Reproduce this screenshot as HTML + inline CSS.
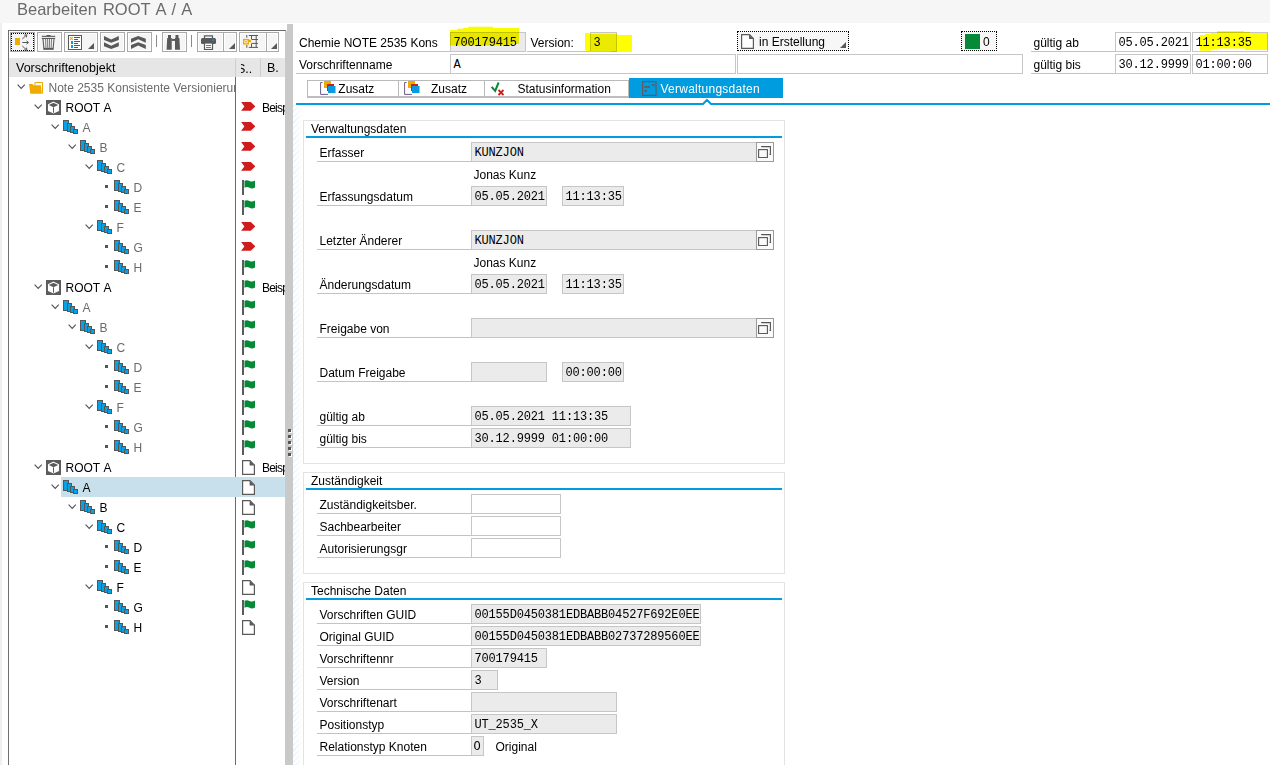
<!DOCTYPE html>
<html><head><meta charset="utf-8"><style>
html,body{margin:0;padding:0;}
body{width:1270px;height:765px;overflow:hidden;position:relative;background:#fff;font-family:'Liberation Sans',sans-serif;}
body div, body span, body svg{position:absolute;box-sizing:border-box;}
span{white-space:nowrap;}
.m{font-family:'Liberation Mono',monospace;font-size:12px;line-height:12px;letter-spacing:-0.17px;}
</style></head><body>
<div style="left:0px;top:0px;width:1270px;height:23px;background:#f6f6f6"></div>
<div style="left:0px;top:23px;width:2px;height:742px;background:#f0f0f0"></div>
<span style="left:17px;top:1px;font-size:16.5px;line-height:17px;word-spacing:1.5px;color:#6a6a6a">Bearbeiten ROOT A / A</span>
<div style="left:8px;top:30px;width:1px;height:735px;background:#6e6e6e"></div>
<div style="left:8px;top:30px;width:278px;height:1px;background:#6e6e6e"></div>
<div style="left:287px;top:24px;width:6px;height:741px;background:#c9c9c9"></div>
<div style="left:285px;top:31px;width:2px;height:734px;background:#c9c9c9"></div>
<div style="left:288px;top:429px;width:3px;height:3px;background:#555;box-shadow:1px 1px 0 #fff"></div>
<div style="left:288px;top:435px;width:3px;height:3px;background:#555;box-shadow:1px 1px 0 #fff"></div>
<div style="left:288px;top:441px;width:3px;height:3px;background:#555;box-shadow:1px 1px 0 #fff"></div>
<div style="left:288px;top:447px;width:3px;height:3px;background:#555;box-shadow:1px 1px 0 #fff"></div>
<div style="left:288px;top:453px;width:3px;height:3px;background:#555;box-shadow:1px 1px 0 #fff"></div>
<div style="left:293px;top:105px;width:10px;height:660px;background:linear-gradient(to right,rgba(255,255,255,0) 0,rgba(255,255,255,0.2) 3px,#fff 10px),repeating-linear-gradient(135deg,#ecf4fb 0 1.5px,#fdfeff 1.5px 4px)"></div>
<div style="left:10px;top:32px;width:25px;height:20px;background:#f5f5f5;border:1px solid #a9a9a9"></div>
<div style="left:11px;top:33px;width:23px;height:18px;border:1px dotted #000"></div>
<div style="left:37px;top:32px;width:25px;height:20px;background:#f5f5f5;border:1px solid #a9a9a9;box-shadow:inset 0 0 0 1px #fff"></div>
<div style="left:64px;top:32px;width:34px;height:20px;background:#f5f5f5;border:1px solid #a9a9a9;box-shadow:inset 0 0 0 1px #fff"></div>
<div style="left:100px;top:32px;width:25px;height:20px;background:#f5f5f5;border:1px solid #a9a9a9;box-shadow:inset 0 0 0 1px #fff"></div>
<div style="left:127px;top:32px;width:25px;height:20px;background:#f5f5f5;border:1px solid #a9a9a9;box-shadow:inset 0 0 0 1px #fff"></div>
<div style="left:156px;top:35px;width:1px;height:12px;background:#8a8a8a"></div>
<div style="left:162px;top:32px;width:25px;height:20px;background:#f5f5f5;border:1px solid #a9a9a9;box-shadow:inset 0 0 0 1px #fff"></div>
<div style="left:191px;top:35px;width:1px;height:12px;background:#8a8a8a"></div>
<div style="left:197px;top:32px;width:27px;height:20px;background:#f5f5f5;border:1px solid #a9a9a9;box-shadow:inset 0 0 0 1px #fff"></div>
<div style="left:223px;top:32px;width:14px;height:20px;background:#f5f5f5;border:1px solid #a9a9a9;box-shadow:inset 0 0 0 1px #fff"></div>
<div style="left:239px;top:32px;width:28px;height:20px;background:#f5f5f5;border:1px solid #a9a9a9;box-shadow:inset 0 0 0 1px #fff"></div>
<div style="left:266px;top:32px;width:13px;height:20px;background:#f5f5f5;border:1px solid #a9a9a9;box-shadow:inset 0 0 0 1px #fff"></div>
<svg style="left:88px;top:43px;" width="6" height="6" viewBox="0 0 6 6" shape-rendering="crispEdges"><path d="M6 0 L6 6 L0 6 Z" fill="#595959" shape-rendering="geometricPrecision"/></svg>
<svg style="left:229px;top:43px;" width="6" height="6" viewBox="0 0 6 6" shape-rendering="crispEdges"><path d="M6 0 L6 6 L0 6 Z" fill="#595959" shape-rendering="geometricPrecision"/></svg>
<svg style="left:271px;top:43px;" width="6" height="6" viewBox="0 0 6 6" shape-rendering="crispEdges"><path d="M6 0 L6 6 L0 6 Z" fill="#595959" shape-rendering="geometricPrecision"/></svg>
<svg style="left:15px;top:34px;" width="15" height="17" viewBox="0 0 15 17" shape-rendering="crispEdges"><rect x="0" y="4" width="5" height="7" fill="#f0ab00"/>
<g stroke="#595959" stroke-width="1" fill="none" shape-rendering="geometricPrecision">
<path d="M7.3 5 L11.3 1.3"/><path d="M9.2 1.1 L11.8 0.8 L11.5 3.4"/>
<path d="M7.3 8.5 L13.3 8.5"/><path d="M11.5 6.8 L13.5 8.5 L11.5 10.2"/>
<path d="M7.3 12 L11.3 15.7"/><path d="M9.2 15.9 L11.8 16.2 L11.5 13.6"/></g></svg>
<svg style="left:41px;top:34px;" width="15" height="16" viewBox="0 0 15 16" shape-rendering="crispEdges"><g shape-rendering="geometricPrecision" fill="#595959">
<rect x="5.5" y="1" width="4" height="1.3"/>
<rect x="0.8" y="1.8" width="13.4" height="1.1"/>
<rect x="0.8" y="3.9" width="13.4" height="1.1"/>
<path d="M2 5 L3 15.7 M13 5 L12 15.7" fill="none" stroke="#595959" stroke-width="1.1"/>
<path d="M4.6 5 L4.9 13.8 M6.6 5 L6.7 13.8 M8.5 5 L8.4 13.8 M10.5 5 L10.2 13.8" fill="none" stroke="#595959" stroke-width="0.8"/>
<rect x="2.8" y="13.8" width="9.4" height="2"/></g></svg>
<svg style="left:68px;top:35px;" width="14" height="15" viewBox="0 0 14 15" shape-rendering="crispEdges"><rect x="0.5" y="0.5" width="13" height="14" fill="#fff" stroke="#595959" stroke-width="1"/>
<path d="M2.2 2 L4.8 4.8 M4.8 2 L2.2 4.8" stroke="#f0ab00" stroke-width="1.1" shape-rendering="geometricPrecision"/>
<rect x="2.8" y="6" width="2.4" height="2.5" fill="#0a9ae0"/><rect x="2.8" y="10" width="2.4" height="2.5" fill="#0a9ae0"/>
<g fill="#595959"><rect x="6" y="2" width="6" height="1"/><rect x="6" y="4" width="4" height="1"/><rect x="6" y="6" width="6" height="1"/><rect x="6" y="8" width="4" height="1"/><rect x="6" y="10" width="6" height="1"/><rect x="6" y="12" width="4" height="1"/></g></svg>
<svg style="left:104px;top:36px;" width="15" height="14" viewBox="0 0 15 14" shape-rendering="crispEdges"><g fill="#595959" shape-rendering="geometricPrecision"><path d="M0 0 L7.2 3.4 L14.8 0 L14.8 3.9 L7.2 6.8 L0 3.9 Z"/><path d="M0 6.3 L7.2 9.7 L14.8 6.3 L14.8 10.2 L7.2 13.1 L0 10.2 Z"/></g></svg>
<svg style="left:131px;top:35px;" width="15" height="14" viewBox="0 0 15 14" shape-rendering="crispEdges"><g fill="#595959" shape-rendering="geometricPrecision" transform="translate(0,14) scale(1,-1)"><path d="M0 0 L7.2 3.4 L14.8 0 L14.8 3.9 L7.2 6.8 L0 3.9 Z"/><path d="M0 6.3 L7.2 9.7 L14.8 6.3 L14.8 10.2 L7.2 13.1 L0 10.2 Z"/></g></svg>
<svg style="left:166px;top:35px;" width="15" height="15" viewBox="0 0 15 15" shape-rendering="crispEdges"><g fill="#595959" shape-rendering="geometricPrecision">
<path d="M2 0 H5 V3 H5.7 V14.8 H0.6 L1.2 3 H2 Z"/>
<path d="M9.5 0 H12.5 V3 H13.4 L14 14.8 H9 V3 H9.5 Z"/>
<rect x="5.5" y="3.9" width="4" height="2"/></g></svg>
<svg style="left:201px;top:35px;" width="15" height="15" viewBox="0 0 15 15" shape-rendering="crispEdges"><g shape-rendering="geometricPrecision">
<path d="M3.5 3 L3.5 0.8 L11.5 0.8 L11.5 3" fill="none" stroke="#595959" stroke-width="1.2"/>
<rect x="0" y="3" width="15" height="6" rx="1.5" fill="#595959"/>
<rect x="11" y="4.5" width="2" height="1.2" fill="#0a9ae0"/>
<rect x="3.5" y="8" width="8" height="6.5" fill="#fff" stroke="#595959" stroke-width="1.2"/>
<rect x="5" y="10" width="5" height="1" fill="#0a9ae0"/><rect x="5" y="12" width="5" height="1" fill="#0a9ae0"/></g></svg>
<svg style="left:243px;top:35px;" width="16" height="14" viewBox="0 0 16 14" shape-rendering="crispEdges"><g shape-rendering="geometricPrecision">
<g stroke="#595959" stroke-width="1" fill="none"><path d="M3.8 0 L3.8 2.7 M3.8 10 L3.8 12.8 M5.8 0.5 L15 0.5 M5.8 12.4 L15 12.4 M8.5 0.5 L8.5 4.6 M8.5 8.4 L8.5 12.4 M13.2 0.5 L13.2 12.4 M9 4.5 L15 4.5 M9 8.4 L15 8.4"/></g>
<rect x="0.7" y="4.6" width="4.6" height="4.3" fill="#fff" stroke="#f0ab00" stroke-width="1.4"/>
<circle cx="3" cy="6.7" r="0.9" fill="#f0ab00"/>
<path d="M5.2 4.8 L8.2 4.8 L8.2 7.6 L7.3 7.6 L7.3 6.9 L5.2 6.9 Z" fill="#f0ab00"/></g></svg>
<div style="left:9px;top:58px;width:276px;height:19px;background:#e6e6e6"></div>
<div style="left:235px;top:58px;width:1px;height:19px;background:#cfcfcf"></div>
<div style="left:260px;top:58px;width:1px;height:19px;background:#cfcfcf"></div>
<span style="left:16px;top:62px;font-size:12.5px;line-height:12px;color:#000;">Vorschriftenobjekt</span>
<div style="left:241px;top:58px;width:19px;height:19px;overflow:hidden"><span style="left:-4px;top:5px;font-size:12.5px;line-height:13px;color:#000">S..</span></div>
<span style="left:267px;top:62px;font-size:12.5px;line-height:12px;color:#000;">B.</span>
<div style="left:235px;top:77px;width:1px;height:688px;background:#6a6a6a"></div>
<svg style="left:17px;top:84px;" width="9" height="6" viewBox="0 0 9 6" shape-rendering="crispEdges"><path d="M0.6 0.6 L4.2 4.4 L7.8 0.6" fill="none" stroke="#555" stroke-width="1.15" shape-rendering="geometricPrecision"/></svg>
<svg style="left:29px;top:82px;" width="14" height="12" viewBox="0 0 14 12" shape-rendering="crispEdges"><g shape-rendering="geometricPrecision"><path d="M6 3.5 L6 0.5 L13.5 0.5 L13.5 11.5" fill="#fff" stroke="#f0ab00" stroke-width="1"/><path d="M0 2 L3.5 2 L4.5 3.3 L11.9 3.3 L12.9 11.8 L1.3 11.8 Z" fill="#f0ab00"/></g></svg>
<div style="left:48.5px;top:77px;width:186.5px;height:20px;overflow:hidden"><span style="left:0;top:5px;font-size:12px;line-height:12px;color:#6b6b6b">Note 2535 Konsistente Versionierung</span></div>
<svg style="left:34px;top:104px;" width="9" height="6" viewBox="0 0 9 6" shape-rendering="crispEdges"><path d="M0.6 0.6 L4.2 4.4 L7.8 0.6" fill="none" stroke="#555" stroke-width="1.15" shape-rendering="geometricPrecision"/></svg>
<svg style="left:46px;top:100px;" width="15" height="15" viewBox="0 0 15 15" shape-rendering="crispEdges"><rect x="0" y="0" width="15" height="15" fill="#5c5c5c"/><g shape-rendering="geometricPrecision" stroke="#fff" stroke-width="1.1" fill="none"><path d="M7.5 2.2 L12.5 4.6 L12.5 10.6 L7.5 13 L2.5 10.6 L2.5 4.6 Z"/></g><path d="M2.8 4.9 L7.5 7.3 L12.2 4.9 L12.2 10.4 L7.5 12.7 L2.8 10.4 Z" fill="#fff" shape-rendering="geometricPrecision"/><path d="M7.5 7.3 L7.5 12.7" stroke="#5c5c5c" stroke-width="1" shape-rendering="geometricPrecision"/></svg>
<span style="left:65.5px;top:102px;font-size:12px;line-height:12px;word-spacing:1px;color:#000">ROOT A</span>
<svg style="left:241px;top:102px;" width="14" height="10" viewBox="0 0 14 10" shape-rendering="crispEdges"><path d="M0.1 0 L9.8 0 L14.3 4.4 L9.8 8.8 L0.1 8.8 L3.4 4.4 Z" fill="#d01c1c" shape-rendering="geometricPrecision"/></svg>
<div style="left:262px;top:97px;width:23px;height:20px;overflow:hidden"><span style="left:0;top:5px;font-size:12px;line-height:12px;letter-spacing:-0.8px;color:#000">Beispiel</span></div>
<svg style="left:51px;top:124px;" width="9" height="6" viewBox="0 0 9 6" shape-rendering="crispEdges"><path d="M0.6 0.6 L4.2 4.4 L7.8 0.6" fill="none" stroke="#555" stroke-width="1.15" shape-rendering="geometricPrecision"/></svg>
<svg style="left:63px;top:120px;" width="15" height="14" viewBox="0 0 15 14" shape-rendering="crispEdges"><rect x="0" y="0" width="6" height="11" fill="#565656"/><rect x="1" y="1" width="4" height="9" fill="#05a2e6"/><rect x="4" y="3" width="5" height="9" fill="#565656"/><rect x="5" y="4" width="3" height="7" fill="#05a2e6"/><rect x="7" y="6" width="5" height="7" fill="#565656"/><rect x="8" y="7" width="3" height="5" fill="#05a2e6"/><rect x="10" y="9" width="5" height="5" fill="#565656"/><rect x="11" y="10" width="3" height="3" fill="#05a2e6"/><rect x="11" y="13" width="4" height="1" fill="#565656"/></svg>
<span style="left:82.5px;top:122px;font-size:12px;line-height:12px;word-spacing:1px;color:#6b6b6b">A</span>
<svg style="left:241px;top:122px;" width="14" height="10" viewBox="0 0 14 10" shape-rendering="crispEdges"><path d="M0.1 0 L9.8 0 L14.3 4.4 L9.8 8.8 L0.1 8.8 L3.4 4.4 Z" fill="#d01c1c" shape-rendering="geometricPrecision"/></svg>
<svg style="left:68px;top:144px;" width="9" height="6" viewBox="0 0 9 6" shape-rendering="crispEdges"><path d="M0.6 0.6 L4.2 4.4 L7.8 0.6" fill="none" stroke="#555" stroke-width="1.15" shape-rendering="geometricPrecision"/></svg>
<svg style="left:80px;top:140px;" width="15" height="14" viewBox="0 0 15 14" shape-rendering="crispEdges"><rect x="0" y="0" width="6" height="11" fill="#565656"/><rect x="1" y="1" width="4" height="9" fill="#05a2e6"/><rect x="4" y="3" width="5" height="9" fill="#565656"/><rect x="5" y="4" width="3" height="7" fill="#05a2e6"/><rect x="7" y="6" width="5" height="7" fill="#565656"/><rect x="8" y="7" width="3" height="5" fill="#05a2e6"/><rect x="10" y="9" width="5" height="5" fill="#565656"/><rect x="11" y="10" width="3" height="3" fill="#05a2e6"/><rect x="11" y="13" width="4" height="1" fill="#565656"/></svg>
<span style="left:99.5px;top:142px;font-size:12px;line-height:12px;word-spacing:1px;color:#6b6b6b">B</span>
<svg style="left:241px;top:142px;" width="14" height="10" viewBox="0 0 14 10" shape-rendering="crispEdges"><path d="M0.1 0 L9.8 0 L14.3 4.4 L9.8 8.8 L0.1 8.8 L3.4 4.4 Z" fill="#d01c1c" shape-rendering="geometricPrecision"/></svg>
<svg style="left:85px;top:164px;" width="9" height="6" viewBox="0 0 9 6" shape-rendering="crispEdges"><path d="M0.6 0.6 L4.2 4.4 L7.8 0.6" fill="none" stroke="#555" stroke-width="1.15" shape-rendering="geometricPrecision"/></svg>
<svg style="left:97px;top:160px;" width="15" height="14" viewBox="0 0 15 14" shape-rendering="crispEdges"><rect x="0" y="0" width="6" height="11" fill="#565656"/><rect x="1" y="1" width="4" height="9" fill="#05a2e6"/><rect x="4" y="3" width="5" height="9" fill="#565656"/><rect x="5" y="4" width="3" height="7" fill="#05a2e6"/><rect x="7" y="6" width="5" height="7" fill="#565656"/><rect x="8" y="7" width="3" height="5" fill="#05a2e6"/><rect x="10" y="9" width="5" height="5" fill="#565656"/><rect x="11" y="10" width="3" height="3" fill="#05a2e6"/><rect x="11" y="13" width="4" height="1" fill="#565656"/></svg>
<span style="left:116.5px;top:162px;font-size:12px;line-height:12px;word-spacing:1px;color:#6b6b6b">C</span>
<svg style="left:241px;top:162px;" width="14" height="10" viewBox="0 0 14 10" shape-rendering="crispEdges"><path d="M0.1 0 L9.8 0 L14.3 4.4 L9.8 8.8 L0.1 8.8 L3.4 4.4 Z" fill="#d01c1c" shape-rendering="geometricPrecision"/></svg>
<div style="left:105px;top:185px;width:3px;height:3px;background:#555"></div>
<svg style="left:114px;top:180px;" width="15" height="14" viewBox="0 0 15 14" shape-rendering="crispEdges"><rect x="0" y="0" width="6" height="11" fill="#565656"/><rect x="1" y="1" width="4" height="9" fill="#05a2e6"/><rect x="4" y="3" width="5" height="9" fill="#565656"/><rect x="5" y="4" width="3" height="7" fill="#05a2e6"/><rect x="7" y="6" width="5" height="7" fill="#565656"/><rect x="8" y="7" width="3" height="5" fill="#05a2e6"/><rect x="10" y="9" width="5" height="5" fill="#565656"/><rect x="11" y="10" width="3" height="3" fill="#05a2e6"/><rect x="11" y="13" width="4" height="1" fill="#565656"/></svg>
<span style="left:133.5px;top:182px;font-size:12px;line-height:12px;word-spacing:1px;color:#6b6b6b">D</span>
<svg style="left:241.5px;top:180px;" width="14" height="15" viewBox="0 0 14 15" shape-rendering="crispEdges"><rect x="0" y="0" width="2" height="15" fill="#5a5a5a"/><path d="M2.5 0.8 Q5 -0.6 7.5 1 Q10 2.2 13 0.6 L13 7.6 Q10 9.4 7.5 7.8 Q5 6.4 2.5 7.8 Z" fill="#078a38" shape-rendering="geometricPrecision"/></svg>
<div style="left:105px;top:205px;width:3px;height:3px;background:#555"></div>
<svg style="left:114px;top:200px;" width="15" height="14" viewBox="0 0 15 14" shape-rendering="crispEdges"><rect x="0" y="0" width="6" height="11" fill="#565656"/><rect x="1" y="1" width="4" height="9" fill="#05a2e6"/><rect x="4" y="3" width="5" height="9" fill="#565656"/><rect x="5" y="4" width="3" height="7" fill="#05a2e6"/><rect x="7" y="6" width="5" height="7" fill="#565656"/><rect x="8" y="7" width="3" height="5" fill="#05a2e6"/><rect x="10" y="9" width="5" height="5" fill="#565656"/><rect x="11" y="10" width="3" height="3" fill="#05a2e6"/><rect x="11" y="13" width="4" height="1" fill="#565656"/></svg>
<span style="left:133.5px;top:202px;font-size:12px;line-height:12px;word-spacing:1px;color:#6b6b6b">E</span>
<svg style="left:241.5px;top:200px;" width="14" height="15" viewBox="0 0 14 15" shape-rendering="crispEdges"><rect x="0" y="0" width="2" height="15" fill="#5a5a5a"/><path d="M2.5 0.8 Q5 -0.6 7.5 1 Q10 2.2 13 0.6 L13 7.6 Q10 9.4 7.5 7.8 Q5 6.4 2.5 7.8 Z" fill="#078a38" shape-rendering="geometricPrecision"/></svg>
<svg style="left:85px;top:224px;" width="9" height="6" viewBox="0 0 9 6" shape-rendering="crispEdges"><path d="M0.6 0.6 L4.2 4.4 L7.8 0.6" fill="none" stroke="#555" stroke-width="1.15" shape-rendering="geometricPrecision"/></svg>
<svg style="left:97px;top:220px;" width="15" height="14" viewBox="0 0 15 14" shape-rendering="crispEdges"><rect x="0" y="0" width="6" height="11" fill="#565656"/><rect x="1" y="1" width="4" height="9" fill="#05a2e6"/><rect x="4" y="3" width="5" height="9" fill="#565656"/><rect x="5" y="4" width="3" height="7" fill="#05a2e6"/><rect x="7" y="6" width="5" height="7" fill="#565656"/><rect x="8" y="7" width="3" height="5" fill="#05a2e6"/><rect x="10" y="9" width="5" height="5" fill="#565656"/><rect x="11" y="10" width="3" height="3" fill="#05a2e6"/><rect x="11" y="13" width="4" height="1" fill="#565656"/></svg>
<span style="left:116.5px;top:222px;font-size:12px;line-height:12px;word-spacing:1px;color:#6b6b6b">F</span>
<svg style="left:241px;top:222px;" width="14" height="10" viewBox="0 0 14 10" shape-rendering="crispEdges"><path d="M0.1 0 L9.8 0 L14.3 4.4 L9.8 8.8 L0.1 8.8 L3.4 4.4 Z" fill="#d01c1c" shape-rendering="geometricPrecision"/></svg>
<div style="left:105px;top:245px;width:3px;height:3px;background:#555"></div>
<svg style="left:114px;top:240px;" width="15" height="14" viewBox="0 0 15 14" shape-rendering="crispEdges"><rect x="0" y="0" width="6" height="11" fill="#565656"/><rect x="1" y="1" width="4" height="9" fill="#05a2e6"/><rect x="4" y="3" width="5" height="9" fill="#565656"/><rect x="5" y="4" width="3" height="7" fill="#05a2e6"/><rect x="7" y="6" width="5" height="7" fill="#565656"/><rect x="8" y="7" width="3" height="5" fill="#05a2e6"/><rect x="10" y="9" width="5" height="5" fill="#565656"/><rect x="11" y="10" width="3" height="3" fill="#05a2e6"/><rect x="11" y="13" width="4" height="1" fill="#565656"/></svg>
<span style="left:133.5px;top:242px;font-size:12px;line-height:12px;word-spacing:1px;color:#6b6b6b">G</span>
<svg style="left:241px;top:242px;" width="14" height="10" viewBox="0 0 14 10" shape-rendering="crispEdges"><path d="M0.1 0 L9.8 0 L14.3 4.4 L9.8 8.8 L0.1 8.8 L3.4 4.4 Z" fill="#d01c1c" shape-rendering="geometricPrecision"/></svg>
<div style="left:105px;top:265px;width:3px;height:3px;background:#555"></div>
<svg style="left:114px;top:260px;" width="15" height="14" viewBox="0 0 15 14" shape-rendering="crispEdges"><rect x="0" y="0" width="6" height="11" fill="#565656"/><rect x="1" y="1" width="4" height="9" fill="#05a2e6"/><rect x="4" y="3" width="5" height="9" fill="#565656"/><rect x="5" y="4" width="3" height="7" fill="#05a2e6"/><rect x="7" y="6" width="5" height="7" fill="#565656"/><rect x="8" y="7" width="3" height="5" fill="#05a2e6"/><rect x="10" y="9" width="5" height="5" fill="#565656"/><rect x="11" y="10" width="3" height="3" fill="#05a2e6"/><rect x="11" y="13" width="4" height="1" fill="#565656"/></svg>
<span style="left:133.5px;top:262px;font-size:12px;line-height:12px;word-spacing:1px;color:#6b6b6b">H</span>
<svg style="left:241.5px;top:260px;" width="14" height="15" viewBox="0 0 14 15" shape-rendering="crispEdges"><rect x="0" y="0" width="2" height="15" fill="#5a5a5a"/><path d="M2.5 0.8 Q5 -0.6 7.5 1 Q10 2.2 13 0.6 L13 7.6 Q10 9.4 7.5 7.8 Q5 6.4 2.5 7.8 Z" fill="#078a38" shape-rendering="geometricPrecision"/></svg>
<svg style="left:34px;top:284px;" width="9" height="6" viewBox="0 0 9 6" shape-rendering="crispEdges"><path d="M0.6 0.6 L4.2 4.4 L7.8 0.6" fill="none" stroke="#555" stroke-width="1.15" shape-rendering="geometricPrecision"/></svg>
<svg style="left:46px;top:280px;" width="15" height="15" viewBox="0 0 15 15" shape-rendering="crispEdges"><rect x="0" y="0" width="15" height="15" fill="#5c5c5c"/><g shape-rendering="geometricPrecision" stroke="#fff" stroke-width="1.1" fill="none"><path d="M7.5 2.2 L12.5 4.6 L12.5 10.6 L7.5 13 L2.5 10.6 L2.5 4.6 Z"/></g><path d="M2.8 4.9 L7.5 7.3 L12.2 4.9 L12.2 10.4 L7.5 12.7 L2.8 10.4 Z" fill="#fff" shape-rendering="geometricPrecision"/><path d="M7.5 7.3 L7.5 12.7" stroke="#5c5c5c" stroke-width="1" shape-rendering="geometricPrecision"/></svg>
<span style="left:65.5px;top:282px;font-size:12px;line-height:12px;word-spacing:1px;color:#000">ROOT A</span>
<svg style="left:241.5px;top:280px;" width="14" height="15" viewBox="0 0 14 15" shape-rendering="crispEdges"><rect x="0" y="0" width="2" height="15" fill="#5a5a5a"/><path d="M2.5 0.8 Q5 -0.6 7.5 1 Q10 2.2 13 0.6 L13 7.6 Q10 9.4 7.5 7.8 Q5 6.4 2.5 7.8 Z" fill="#078a38" shape-rendering="geometricPrecision"/></svg>
<div style="left:262px;top:277px;width:23px;height:20px;overflow:hidden"><span style="left:0;top:5px;font-size:12px;line-height:12px;letter-spacing:-0.8px;color:#000">Beispiel</span></div>
<svg style="left:51px;top:304px;" width="9" height="6" viewBox="0 0 9 6" shape-rendering="crispEdges"><path d="M0.6 0.6 L4.2 4.4 L7.8 0.6" fill="none" stroke="#555" stroke-width="1.15" shape-rendering="geometricPrecision"/></svg>
<svg style="left:63px;top:300px;" width="15" height="14" viewBox="0 0 15 14" shape-rendering="crispEdges"><rect x="0" y="0" width="6" height="11" fill="#565656"/><rect x="1" y="1" width="4" height="9" fill="#05a2e6"/><rect x="4" y="3" width="5" height="9" fill="#565656"/><rect x="5" y="4" width="3" height="7" fill="#05a2e6"/><rect x="7" y="6" width="5" height="7" fill="#565656"/><rect x="8" y="7" width="3" height="5" fill="#05a2e6"/><rect x="10" y="9" width="5" height="5" fill="#565656"/><rect x="11" y="10" width="3" height="3" fill="#05a2e6"/><rect x="11" y="13" width="4" height="1" fill="#565656"/></svg>
<span style="left:82.5px;top:302px;font-size:12px;line-height:12px;word-spacing:1px;color:#6b6b6b">A</span>
<svg style="left:241.5px;top:300px;" width="14" height="15" viewBox="0 0 14 15" shape-rendering="crispEdges"><rect x="0" y="0" width="2" height="15" fill="#5a5a5a"/><path d="M2.5 0.8 Q5 -0.6 7.5 1 Q10 2.2 13 0.6 L13 7.6 Q10 9.4 7.5 7.8 Q5 6.4 2.5 7.8 Z" fill="#078a38" shape-rendering="geometricPrecision"/></svg>
<svg style="left:68px;top:324px;" width="9" height="6" viewBox="0 0 9 6" shape-rendering="crispEdges"><path d="M0.6 0.6 L4.2 4.4 L7.8 0.6" fill="none" stroke="#555" stroke-width="1.15" shape-rendering="geometricPrecision"/></svg>
<svg style="left:80px;top:320px;" width="15" height="14" viewBox="0 0 15 14" shape-rendering="crispEdges"><rect x="0" y="0" width="6" height="11" fill="#565656"/><rect x="1" y="1" width="4" height="9" fill="#05a2e6"/><rect x="4" y="3" width="5" height="9" fill="#565656"/><rect x="5" y="4" width="3" height="7" fill="#05a2e6"/><rect x="7" y="6" width="5" height="7" fill="#565656"/><rect x="8" y="7" width="3" height="5" fill="#05a2e6"/><rect x="10" y="9" width="5" height="5" fill="#565656"/><rect x="11" y="10" width="3" height="3" fill="#05a2e6"/><rect x="11" y="13" width="4" height="1" fill="#565656"/></svg>
<span style="left:99.5px;top:322px;font-size:12px;line-height:12px;word-spacing:1px;color:#6b6b6b">B</span>
<svg style="left:241.5px;top:320px;" width="14" height="15" viewBox="0 0 14 15" shape-rendering="crispEdges"><rect x="0" y="0" width="2" height="15" fill="#5a5a5a"/><path d="M2.5 0.8 Q5 -0.6 7.5 1 Q10 2.2 13 0.6 L13 7.6 Q10 9.4 7.5 7.8 Q5 6.4 2.5 7.8 Z" fill="#078a38" shape-rendering="geometricPrecision"/></svg>
<svg style="left:85px;top:344px;" width="9" height="6" viewBox="0 0 9 6" shape-rendering="crispEdges"><path d="M0.6 0.6 L4.2 4.4 L7.8 0.6" fill="none" stroke="#555" stroke-width="1.15" shape-rendering="geometricPrecision"/></svg>
<svg style="left:97px;top:340px;" width="15" height="14" viewBox="0 0 15 14" shape-rendering="crispEdges"><rect x="0" y="0" width="6" height="11" fill="#565656"/><rect x="1" y="1" width="4" height="9" fill="#05a2e6"/><rect x="4" y="3" width="5" height="9" fill="#565656"/><rect x="5" y="4" width="3" height="7" fill="#05a2e6"/><rect x="7" y="6" width="5" height="7" fill="#565656"/><rect x="8" y="7" width="3" height="5" fill="#05a2e6"/><rect x="10" y="9" width="5" height="5" fill="#565656"/><rect x="11" y="10" width="3" height="3" fill="#05a2e6"/><rect x="11" y="13" width="4" height="1" fill="#565656"/></svg>
<span style="left:116.5px;top:342px;font-size:12px;line-height:12px;word-spacing:1px;color:#6b6b6b">C</span>
<svg style="left:241.5px;top:340px;" width="14" height="15" viewBox="0 0 14 15" shape-rendering="crispEdges"><rect x="0" y="0" width="2" height="15" fill="#5a5a5a"/><path d="M2.5 0.8 Q5 -0.6 7.5 1 Q10 2.2 13 0.6 L13 7.6 Q10 9.4 7.5 7.8 Q5 6.4 2.5 7.8 Z" fill="#078a38" shape-rendering="geometricPrecision"/></svg>
<div style="left:105px;top:365px;width:3px;height:3px;background:#555"></div>
<svg style="left:114px;top:360px;" width="15" height="14" viewBox="0 0 15 14" shape-rendering="crispEdges"><rect x="0" y="0" width="6" height="11" fill="#565656"/><rect x="1" y="1" width="4" height="9" fill="#05a2e6"/><rect x="4" y="3" width="5" height="9" fill="#565656"/><rect x="5" y="4" width="3" height="7" fill="#05a2e6"/><rect x="7" y="6" width="5" height="7" fill="#565656"/><rect x="8" y="7" width="3" height="5" fill="#05a2e6"/><rect x="10" y="9" width="5" height="5" fill="#565656"/><rect x="11" y="10" width="3" height="3" fill="#05a2e6"/><rect x="11" y="13" width="4" height="1" fill="#565656"/></svg>
<span style="left:133.5px;top:362px;font-size:12px;line-height:12px;word-spacing:1px;color:#6b6b6b">D</span>
<svg style="left:241.5px;top:360px;" width="14" height="15" viewBox="0 0 14 15" shape-rendering="crispEdges"><rect x="0" y="0" width="2" height="15" fill="#5a5a5a"/><path d="M2.5 0.8 Q5 -0.6 7.5 1 Q10 2.2 13 0.6 L13 7.6 Q10 9.4 7.5 7.8 Q5 6.4 2.5 7.8 Z" fill="#078a38" shape-rendering="geometricPrecision"/></svg>
<div style="left:105px;top:385px;width:3px;height:3px;background:#555"></div>
<svg style="left:114px;top:380px;" width="15" height="14" viewBox="0 0 15 14" shape-rendering="crispEdges"><rect x="0" y="0" width="6" height="11" fill="#565656"/><rect x="1" y="1" width="4" height="9" fill="#05a2e6"/><rect x="4" y="3" width="5" height="9" fill="#565656"/><rect x="5" y="4" width="3" height="7" fill="#05a2e6"/><rect x="7" y="6" width="5" height="7" fill="#565656"/><rect x="8" y="7" width="3" height="5" fill="#05a2e6"/><rect x="10" y="9" width="5" height="5" fill="#565656"/><rect x="11" y="10" width="3" height="3" fill="#05a2e6"/><rect x="11" y="13" width="4" height="1" fill="#565656"/></svg>
<span style="left:133.5px;top:382px;font-size:12px;line-height:12px;word-spacing:1px;color:#6b6b6b">E</span>
<svg style="left:241.5px;top:380px;" width="14" height="15" viewBox="0 0 14 15" shape-rendering="crispEdges"><rect x="0" y="0" width="2" height="15" fill="#5a5a5a"/><path d="M2.5 0.8 Q5 -0.6 7.5 1 Q10 2.2 13 0.6 L13 7.6 Q10 9.4 7.5 7.8 Q5 6.4 2.5 7.8 Z" fill="#078a38" shape-rendering="geometricPrecision"/></svg>
<svg style="left:85px;top:404px;" width="9" height="6" viewBox="0 0 9 6" shape-rendering="crispEdges"><path d="M0.6 0.6 L4.2 4.4 L7.8 0.6" fill="none" stroke="#555" stroke-width="1.15" shape-rendering="geometricPrecision"/></svg>
<svg style="left:97px;top:400px;" width="15" height="14" viewBox="0 0 15 14" shape-rendering="crispEdges"><rect x="0" y="0" width="6" height="11" fill="#565656"/><rect x="1" y="1" width="4" height="9" fill="#05a2e6"/><rect x="4" y="3" width="5" height="9" fill="#565656"/><rect x="5" y="4" width="3" height="7" fill="#05a2e6"/><rect x="7" y="6" width="5" height="7" fill="#565656"/><rect x="8" y="7" width="3" height="5" fill="#05a2e6"/><rect x="10" y="9" width="5" height="5" fill="#565656"/><rect x="11" y="10" width="3" height="3" fill="#05a2e6"/><rect x="11" y="13" width="4" height="1" fill="#565656"/></svg>
<span style="left:116.5px;top:402px;font-size:12px;line-height:12px;word-spacing:1px;color:#6b6b6b">F</span>
<svg style="left:241.5px;top:400px;" width="14" height="15" viewBox="0 0 14 15" shape-rendering="crispEdges"><rect x="0" y="0" width="2" height="15" fill="#5a5a5a"/><path d="M2.5 0.8 Q5 -0.6 7.5 1 Q10 2.2 13 0.6 L13 7.6 Q10 9.4 7.5 7.8 Q5 6.4 2.5 7.8 Z" fill="#078a38" shape-rendering="geometricPrecision"/></svg>
<div style="left:105px;top:425px;width:3px;height:3px;background:#555"></div>
<svg style="left:114px;top:420px;" width="15" height="14" viewBox="0 0 15 14" shape-rendering="crispEdges"><rect x="0" y="0" width="6" height="11" fill="#565656"/><rect x="1" y="1" width="4" height="9" fill="#05a2e6"/><rect x="4" y="3" width="5" height="9" fill="#565656"/><rect x="5" y="4" width="3" height="7" fill="#05a2e6"/><rect x="7" y="6" width="5" height="7" fill="#565656"/><rect x="8" y="7" width="3" height="5" fill="#05a2e6"/><rect x="10" y="9" width="5" height="5" fill="#565656"/><rect x="11" y="10" width="3" height="3" fill="#05a2e6"/><rect x="11" y="13" width="4" height="1" fill="#565656"/></svg>
<span style="left:133.5px;top:422px;font-size:12px;line-height:12px;word-spacing:1px;color:#6b6b6b">G</span>
<svg style="left:241.5px;top:420px;" width="14" height="15" viewBox="0 0 14 15" shape-rendering="crispEdges"><rect x="0" y="0" width="2" height="15" fill="#5a5a5a"/><path d="M2.5 0.8 Q5 -0.6 7.5 1 Q10 2.2 13 0.6 L13 7.6 Q10 9.4 7.5 7.8 Q5 6.4 2.5 7.8 Z" fill="#078a38" shape-rendering="geometricPrecision"/></svg>
<div style="left:105px;top:445px;width:3px;height:3px;background:#555"></div>
<svg style="left:114px;top:440px;" width="15" height="14" viewBox="0 0 15 14" shape-rendering="crispEdges"><rect x="0" y="0" width="6" height="11" fill="#565656"/><rect x="1" y="1" width="4" height="9" fill="#05a2e6"/><rect x="4" y="3" width="5" height="9" fill="#565656"/><rect x="5" y="4" width="3" height="7" fill="#05a2e6"/><rect x="7" y="6" width="5" height="7" fill="#565656"/><rect x="8" y="7" width="3" height="5" fill="#05a2e6"/><rect x="10" y="9" width="5" height="5" fill="#565656"/><rect x="11" y="10" width="3" height="3" fill="#05a2e6"/><rect x="11" y="13" width="4" height="1" fill="#565656"/></svg>
<span style="left:133.5px;top:442px;font-size:12px;line-height:12px;word-spacing:1px;color:#6b6b6b">H</span>
<svg style="left:241.5px;top:440px;" width="14" height="15" viewBox="0 0 14 15" shape-rendering="crispEdges"><rect x="0" y="0" width="2" height="15" fill="#5a5a5a"/><path d="M2.5 0.8 Q5 -0.6 7.5 1 Q10 2.2 13 0.6 L13 7.6 Q10 9.4 7.5 7.8 Q5 6.4 2.5 7.8 Z" fill="#078a38" shape-rendering="geometricPrecision"/></svg>
<svg style="left:34px;top:464px;" width="9" height="6" viewBox="0 0 9 6" shape-rendering="crispEdges"><path d="M0.6 0.6 L4.2 4.4 L7.8 0.6" fill="none" stroke="#555" stroke-width="1.15" shape-rendering="geometricPrecision"/></svg>
<svg style="left:46px;top:460px;" width="15" height="15" viewBox="0 0 15 15" shape-rendering="crispEdges"><rect x="0" y="0" width="15" height="15" fill="#5c5c5c"/><g shape-rendering="geometricPrecision" stroke="#fff" stroke-width="1.1" fill="none"><path d="M7.5 2.2 L12.5 4.6 L12.5 10.6 L7.5 13 L2.5 10.6 L2.5 4.6 Z"/></g><path d="M2.8 4.9 L7.5 7.3 L12.2 4.9 L12.2 10.4 L7.5 12.7 L2.8 10.4 Z" fill="#fff" shape-rendering="geometricPrecision"/><path d="M7.5 7.3 L7.5 12.7" stroke="#5c5c5c" stroke-width="1" shape-rendering="geometricPrecision"/></svg>
<span style="left:65.5px;top:462px;font-size:12px;line-height:12px;word-spacing:1px;color:#000">ROOT A</span>
<svg style="left:242px;top:460px;" width="13" height="15" viewBox="0 0 13 15" shape-rendering="crispEdges"><g shape-rendering="geometricPrecision"><path d="M0.6 0.6 L8 0.6 L12.4 5 L12.4 14.4 L0.6 14.4 Z" fill="#fff" stroke="#5a5a5a" stroke-width="1.2"/><path d="M7.6 0.6 L12.4 5.4 L7.6 5.4 Z" fill="#5a5a5a"/></g></svg>
<div style="left:262px;top:457px;width:23px;height:20px;overflow:hidden"><span style="left:0;top:5px;font-size:12px;line-height:12px;letter-spacing:-0.8px;color:#000">Beispiel</span></div>
<div style="left:61px;top:477px;width:224px;height:20px;background:#c8dfec"></div>
<svg style="left:51px;top:484px;" width="9" height="6" viewBox="0 0 9 6" shape-rendering="crispEdges"><path d="M0.6 0.6 L4.2 4.4 L7.8 0.6" fill="none" stroke="#555" stroke-width="1.15" shape-rendering="geometricPrecision"/></svg>
<svg style="left:63px;top:480px;" width="15" height="14" viewBox="0 0 15 14" shape-rendering="crispEdges"><rect x="0" y="0" width="6" height="11" fill="#565656"/><rect x="1" y="1" width="4" height="9" fill="#05a2e6"/><rect x="4" y="3" width="5" height="9" fill="#565656"/><rect x="5" y="4" width="3" height="7" fill="#05a2e6"/><rect x="7" y="6" width="5" height="7" fill="#565656"/><rect x="8" y="7" width="3" height="5" fill="#05a2e6"/><rect x="10" y="9" width="5" height="5" fill="#565656"/><rect x="11" y="10" width="3" height="3" fill="#05a2e6"/><rect x="11" y="13" width="4" height="1" fill="#565656"/></svg>
<span style="left:82.5px;top:482px;font-size:12px;line-height:12px;word-spacing:1px;color:#000">A</span>
<svg style="left:242px;top:480px;" width="13" height="15" viewBox="0 0 13 15" shape-rendering="crispEdges"><g shape-rendering="geometricPrecision"><path d="M0.6 0.6 L8 0.6 L12.4 5 L12.4 14.4 L0.6 14.4 Z" fill="#fff" stroke="#5a5a5a" stroke-width="1.2"/><path d="M7.6 0.6 L12.4 5.4 L7.6 5.4 Z" fill="#5a5a5a"/></g></svg>
<svg style="left:68px;top:504px;" width="9" height="6" viewBox="0 0 9 6" shape-rendering="crispEdges"><path d="M0.6 0.6 L4.2 4.4 L7.8 0.6" fill="none" stroke="#555" stroke-width="1.15" shape-rendering="geometricPrecision"/></svg>
<svg style="left:80px;top:500px;" width="15" height="14" viewBox="0 0 15 14" shape-rendering="crispEdges"><rect x="0" y="0" width="6" height="11" fill="#565656"/><rect x="1" y="1" width="4" height="9" fill="#05a2e6"/><rect x="4" y="3" width="5" height="9" fill="#565656"/><rect x="5" y="4" width="3" height="7" fill="#05a2e6"/><rect x="7" y="6" width="5" height="7" fill="#565656"/><rect x="8" y="7" width="3" height="5" fill="#05a2e6"/><rect x="10" y="9" width="5" height="5" fill="#565656"/><rect x="11" y="10" width="3" height="3" fill="#05a2e6"/><rect x="11" y="13" width="4" height="1" fill="#565656"/></svg>
<span style="left:99.5px;top:502px;font-size:12px;line-height:12px;word-spacing:1px;color:#000">B</span>
<svg style="left:242px;top:500px;" width="13" height="15" viewBox="0 0 13 15" shape-rendering="crispEdges"><g shape-rendering="geometricPrecision"><path d="M0.6 0.6 L8 0.6 L12.4 5 L12.4 14.4 L0.6 14.4 Z" fill="#fff" stroke="#5a5a5a" stroke-width="1.2"/><path d="M7.6 0.6 L12.4 5.4 L7.6 5.4 Z" fill="#5a5a5a"/></g></svg>
<svg style="left:85px;top:524px;" width="9" height="6" viewBox="0 0 9 6" shape-rendering="crispEdges"><path d="M0.6 0.6 L4.2 4.4 L7.8 0.6" fill="none" stroke="#555" stroke-width="1.15" shape-rendering="geometricPrecision"/></svg>
<svg style="left:97px;top:520px;" width="15" height="14" viewBox="0 0 15 14" shape-rendering="crispEdges"><rect x="0" y="0" width="6" height="11" fill="#565656"/><rect x="1" y="1" width="4" height="9" fill="#05a2e6"/><rect x="4" y="3" width="5" height="9" fill="#565656"/><rect x="5" y="4" width="3" height="7" fill="#05a2e6"/><rect x="7" y="6" width="5" height="7" fill="#565656"/><rect x="8" y="7" width="3" height="5" fill="#05a2e6"/><rect x="10" y="9" width="5" height="5" fill="#565656"/><rect x="11" y="10" width="3" height="3" fill="#05a2e6"/><rect x="11" y="13" width="4" height="1" fill="#565656"/></svg>
<span style="left:116.5px;top:522px;font-size:12px;line-height:12px;word-spacing:1px;color:#000">C</span>
<svg style="left:241.5px;top:520px;" width="14" height="15" viewBox="0 0 14 15" shape-rendering="crispEdges"><rect x="0" y="0" width="2" height="15" fill="#5a5a5a"/><path d="M2.5 0.8 Q5 -0.6 7.5 1 Q10 2.2 13 0.6 L13 7.6 Q10 9.4 7.5 7.8 Q5 6.4 2.5 7.8 Z" fill="#078a38" shape-rendering="geometricPrecision"/></svg>
<div style="left:105px;top:545px;width:3px;height:3px;background:#555"></div>
<svg style="left:114px;top:540px;" width="15" height="14" viewBox="0 0 15 14" shape-rendering="crispEdges"><rect x="0" y="0" width="6" height="11" fill="#565656"/><rect x="1" y="1" width="4" height="9" fill="#05a2e6"/><rect x="4" y="3" width="5" height="9" fill="#565656"/><rect x="5" y="4" width="3" height="7" fill="#05a2e6"/><rect x="7" y="6" width="5" height="7" fill="#565656"/><rect x="8" y="7" width="3" height="5" fill="#05a2e6"/><rect x="10" y="9" width="5" height="5" fill="#565656"/><rect x="11" y="10" width="3" height="3" fill="#05a2e6"/><rect x="11" y="13" width="4" height="1" fill="#565656"/></svg>
<span style="left:133.5px;top:542px;font-size:12px;line-height:12px;word-spacing:1px;color:#000">D</span>
<svg style="left:241.5px;top:540px;" width="14" height="15" viewBox="0 0 14 15" shape-rendering="crispEdges"><rect x="0" y="0" width="2" height="15" fill="#5a5a5a"/><path d="M2.5 0.8 Q5 -0.6 7.5 1 Q10 2.2 13 0.6 L13 7.6 Q10 9.4 7.5 7.8 Q5 6.4 2.5 7.8 Z" fill="#078a38" shape-rendering="geometricPrecision"/></svg>
<div style="left:105px;top:565px;width:3px;height:3px;background:#555"></div>
<svg style="left:114px;top:560px;" width="15" height="14" viewBox="0 0 15 14" shape-rendering="crispEdges"><rect x="0" y="0" width="6" height="11" fill="#565656"/><rect x="1" y="1" width="4" height="9" fill="#05a2e6"/><rect x="4" y="3" width="5" height="9" fill="#565656"/><rect x="5" y="4" width="3" height="7" fill="#05a2e6"/><rect x="7" y="6" width="5" height="7" fill="#565656"/><rect x="8" y="7" width="3" height="5" fill="#05a2e6"/><rect x="10" y="9" width="5" height="5" fill="#565656"/><rect x="11" y="10" width="3" height="3" fill="#05a2e6"/><rect x="11" y="13" width="4" height="1" fill="#565656"/></svg>
<span style="left:133.5px;top:562px;font-size:12px;line-height:12px;word-spacing:1px;color:#000">E</span>
<svg style="left:241.5px;top:560px;" width="14" height="15" viewBox="0 0 14 15" shape-rendering="crispEdges"><rect x="0" y="0" width="2" height="15" fill="#5a5a5a"/><path d="M2.5 0.8 Q5 -0.6 7.5 1 Q10 2.2 13 0.6 L13 7.6 Q10 9.4 7.5 7.8 Q5 6.4 2.5 7.8 Z" fill="#078a38" shape-rendering="geometricPrecision"/></svg>
<svg style="left:85px;top:584px;" width="9" height="6" viewBox="0 0 9 6" shape-rendering="crispEdges"><path d="M0.6 0.6 L4.2 4.4 L7.8 0.6" fill="none" stroke="#555" stroke-width="1.15" shape-rendering="geometricPrecision"/></svg>
<svg style="left:97px;top:580px;" width="15" height="14" viewBox="0 0 15 14" shape-rendering="crispEdges"><rect x="0" y="0" width="6" height="11" fill="#565656"/><rect x="1" y="1" width="4" height="9" fill="#05a2e6"/><rect x="4" y="3" width="5" height="9" fill="#565656"/><rect x="5" y="4" width="3" height="7" fill="#05a2e6"/><rect x="7" y="6" width="5" height="7" fill="#565656"/><rect x="8" y="7" width="3" height="5" fill="#05a2e6"/><rect x="10" y="9" width="5" height="5" fill="#565656"/><rect x="11" y="10" width="3" height="3" fill="#05a2e6"/><rect x="11" y="13" width="4" height="1" fill="#565656"/></svg>
<span style="left:116.5px;top:582px;font-size:12px;line-height:12px;word-spacing:1px;color:#000">F</span>
<svg style="left:242px;top:580px;" width="13" height="15" viewBox="0 0 13 15" shape-rendering="crispEdges"><g shape-rendering="geometricPrecision"><path d="M0.6 0.6 L8 0.6 L12.4 5 L12.4 14.4 L0.6 14.4 Z" fill="#fff" stroke="#5a5a5a" stroke-width="1.2"/><path d="M7.6 0.6 L12.4 5.4 L7.6 5.4 Z" fill="#5a5a5a"/></g></svg>
<div style="left:105px;top:605px;width:3px;height:3px;background:#555"></div>
<svg style="left:114px;top:600px;" width="15" height="14" viewBox="0 0 15 14" shape-rendering="crispEdges"><rect x="0" y="0" width="6" height="11" fill="#565656"/><rect x="1" y="1" width="4" height="9" fill="#05a2e6"/><rect x="4" y="3" width="5" height="9" fill="#565656"/><rect x="5" y="4" width="3" height="7" fill="#05a2e6"/><rect x="7" y="6" width="5" height="7" fill="#565656"/><rect x="8" y="7" width="3" height="5" fill="#05a2e6"/><rect x="10" y="9" width="5" height="5" fill="#565656"/><rect x="11" y="10" width="3" height="3" fill="#05a2e6"/><rect x="11" y="13" width="4" height="1" fill="#565656"/></svg>
<span style="left:133.5px;top:602px;font-size:12px;line-height:12px;word-spacing:1px;color:#000">G</span>
<svg style="left:241.5px;top:600px;" width="14" height="15" viewBox="0 0 14 15" shape-rendering="crispEdges"><rect x="0" y="0" width="2" height="15" fill="#5a5a5a"/><path d="M2.5 0.8 Q5 -0.6 7.5 1 Q10 2.2 13 0.6 L13 7.6 Q10 9.4 7.5 7.8 Q5 6.4 2.5 7.8 Z" fill="#078a38" shape-rendering="geometricPrecision"/></svg>
<div style="left:105px;top:625px;width:3px;height:3px;background:#555"></div>
<svg style="left:114px;top:620px;" width="15" height="14" viewBox="0 0 15 14" shape-rendering="crispEdges"><rect x="0" y="0" width="6" height="11" fill="#565656"/><rect x="1" y="1" width="4" height="9" fill="#05a2e6"/><rect x="4" y="3" width="5" height="9" fill="#565656"/><rect x="5" y="4" width="3" height="7" fill="#05a2e6"/><rect x="7" y="6" width="5" height="7" fill="#565656"/><rect x="8" y="7" width="3" height="5" fill="#05a2e6"/><rect x="10" y="9" width="5" height="5" fill="#565656"/><rect x="11" y="10" width="3" height="3" fill="#05a2e6"/><rect x="11" y="13" width="4" height="1" fill="#565656"/></svg>
<span style="left:133.5px;top:622px;font-size:12px;line-height:12px;word-spacing:1px;color:#000">H</span>
<svg style="left:242px;top:620px;" width="13" height="15" viewBox="0 0 13 15" shape-rendering="crispEdges"><g shape-rendering="geometricPrecision"><path d="M0.6 0.6 L8 0.6 L12.4 5 L12.4 14.4 L0.6 14.4 Z" fill="#fff" stroke="#5a5a5a" stroke-width="1.2"/><path d="M7.6 0.6 L12.4 5.4 L7.6 5.4 Z" fill="#5a5a5a"/></g></svg>
<span style="left:299px;top:37px;font-size:12px;line-height:12px;color:#000;">Chemie NOTE 2535 Kons</span>
<div style="left:296px;top:51px;width:154px;height:1px;background:#c3c3c3"></div>
<div style="left:450px;top:32px;width:76px;height:20px;background:#ebebeb;border:1px solid #c6c6c6"></div>
<span style="left:530.5px;top:37px;font-size:12px;line-height:12px;color:#000;">Version:</span>
<div style="left:527px;top:51px;width:63px;height:1px;background:#c3c3c3"></div>
<div style="left:590px;top:32px;width:27px;height:20px;background:#ebebeb;border:1px solid #c6c6c6"></div>
<svg style="left:440px;top:24px;mix-blend-mode:multiply" width="200" height="30" viewBox="0 0 200 30"><path d="M10 5.9 L17 5.9 L17 4.7 L23 4.7 L23 3.9 L28 3.9 L28 2.8 L53 2.8 L53 3.9 L79 3.9 L79 20 L72 20 L72 21.5 L10 21.5 Z" fill="#fafa00"/><path d="M145 9 L150 9 L150 10 L177 10 L177 11 L192 11 L192 28 L171 28 L171 27 L146 27 L146 26 L145 26 Z" fill="#ffff00"/></svg>
<span class="m" style="left:453.5px;top:37px;color:#000;">700179415</span>
<span class="m" style="left:593.5px;top:37px;color:#000;">3</span>
<div style="left:737px;top:31px;width:112px;height:20px;background:#f7f7f7;border:1px dotted #000"></div>
<svg style="left:741px;top:34px;" width="14" height="15" viewBox="0 0 14 15" shape-rendering="crispEdges"><g shape-rendering="geometricPrecision"><path d="M0.6 0.6 L8.5 0.6 L12.4 4.5 L12.4 14.4 L0.6 14.4 Z" fill="#fff" stroke="#5a5a5a" stroke-width="1.2"/><path d="M8 0.6 L12.4 5 L8 5 Z" fill="#5a5a5a"/></g></svg>
<span style="left:759px;top:36px;font-size:12px;line-height:12px;color:#000;">in Erstellung</span>
<svg style="left:840px;top:42px;" width="6" height="6" viewBox="0 0 6 6" shape-rendering="crispEdges"><path d="M6 0 L6 6 L0 6 Z" fill="#595959" shape-rendering="geometricPrecision"/></svg>
<div style="left:961px;top:31px;width:36px;height:20px;background:#f7f7f7;border:1px dotted #000"></div>
<div style="left:965px;top:34px;width:15px;height:15px;background:#078a38"></div>
<span style="left:983px;top:36px;font-size:12px;line-height:12px;color:#000;">0</span>
<span style="left:1033.5px;top:37px;font-size:12px;line-height:12px;color:#000;">g&uuml;ltig ab</span>
<div style="left:1031px;top:51px;width:84px;height:1px;background:#c3c3c3"></div>
<span style="left:1033.5px;top:59px;font-size:12px;line-height:12px;color:#000;">g&uuml;ltig bis</span>
<div style="left:1031px;top:73px;width:84px;height:1px;background:#c3c3c3"></div>
<div style="left:1115px;top:32px;width:76px;height:20px;background:#fff;border:1px solid #c6c6c6"></div>
<div style="left:1192px;top:32px;width:76px;height:20px;background:#fff;border:1px solid #c6c6c6"></div>
<svg style="left:1195px;top:30px;mix-blend-mode:multiply" width="75" height="24" viewBox="0 0 75 24"><path d="M5 5 L10 5 L10 3.7 L16 3.7 L16 2.9 L22 2.9 L22 1 L49 1 L49 2 L55 2 L55 2.9 L72.7 2.9 L72.7 20.1 L50 20.1 L50 18.4 L22 18.4 L22 19.5 L16 19.5 L16 20.8 L5 20.8 Z" fill="#ffff00"/></svg>
<span class="m" style="left:1118.5px;top:37px;color:#000;">05.05.2021</span>
<span class="m" style="left:1195.5px;top:37px;color:#000;">11:13:35</span>
<div style="left:1115px;top:54px;width:76px;height:20px;background:#fff;border:1px solid #c6c6c6"></div>
<span class="m" style="left:1118.5px;top:59px;color:#000;">30.12.9999</span>
<div style="left:1192px;top:54px;width:76px;height:20px;background:#fff;border:1px solid #c6c6c6"></div>
<span class="m" style="left:1195.5px;top:59px;color:#000;">01:00:00</span>
<span style="left:299px;top:59px;font-size:12px;line-height:12px;color:#000;">Vorschriftenname</span>
<div style="left:296px;top:73px;width:154px;height:1px;background:#c3c3c3"></div>
<div style="left:450px;top:54px;width:286px;height:20px;background:#fff;border:1px solid #c6c6c6"></div>
<span class="m" style="left:453.5px;top:59px;color:#000;">A</span>
<div style="left:737px;top:54px;width:286px;height:20px;background:#fff;border:1px solid #c6c6c6"></div>
<div style="left:307px;top:80px;width:322px;height:18px;background:#fff;border:1px solid #b9b9b9;border-bottom:2px solid #bdbdbd"></div>
<div style="left:398px;top:81px;width:1px;height:15px;background:#b9b9b9"></div>
<div style="left:484px;top:81px;width:1px;height:15px;background:#b9b9b9"></div>
<svg style="left:320px;top:81px;" width="16" height="14" viewBox="0 0 16 14" shape-rendering="crispEdges"><g shape-rendering="geometricPrecision"><path d="M2.5 1.5 L0.6 1.5 L0.6 13.4 L8 13.4" fill="none" stroke="#6a5a8a" stroke-width="1"/><rect x="4" y="0" width="7" height="7" fill="#f0ab00"/><rect x="7" y="3" width="7" height="7" fill="#d01c1c"/><rect x="8" y="5" width="7.5" height="7" fill="#0a9ae0"/></g></svg>
<span style="left:338.3px;top:83px;font-size:12px;line-height:12px;color:#000;">Zusatz</span>
<svg style="left:403.5px;top:81px;" width="16" height="14" viewBox="0 0 16 14" shape-rendering="crispEdges"><g shape-rendering="geometricPrecision"><path d="M2.5 1.5 L0.6 1.5 L0.6 13.4 L8 13.4" fill="none" stroke="#6a5a8a" stroke-width="1"/><rect x="4" y="0" width="7" height="7" fill="#f0ab00"/><rect x="7" y="3" width="7" height="7" fill="#d01c1c"/><rect x="8" y="5" width="7.5" height="7" fill="#0a9ae0"/></g></svg>
<span style="left:431px;top:83px;font-size:12px;line-height:12px;color:#000;">Zusatz</span>
<svg style="left:490px;top:81px;" width="15" height="15" viewBox="0 0 15 15" shape-rendering="crispEdges"><g shape-rendering="geometricPrecision"><path d="M1.6 5.8 L5.2 9.8 L8.6 1.5" fill="none" stroke="#078a38" stroke-width="2"/><path d="M8.5 9 L13.5 14 M13.5 9 L8.5 14" stroke="#d01c1c" stroke-width="1.8"/></g></svg>
<span style="left:517.5px;top:83px;font-size:12px;line-height:12px;color:#000;">Statusinformation</span>
<div style="left:629px;top:78px;width:154px;height:20px;background:#009ce0"></div>
<svg style="left:642px;top:81px;" width="15" height="15" viewBox="0 0 15 15" shape-rendering="crispEdges"><g shape-rendering="geometricPrecision"><rect x="0.6" y="0.6" width="13.4" height="13.8" fill="none" stroke="#5e5858" stroke-width="1.1"/><rect x="2.2" y="5.2" width="5.8" height="1.5" fill="#6a5555"/><rect x="2.2" y="9.2" width="2.8" height="1.5" fill="#6a5555"/><rect x="10" y="3.2" width="2.7" height="1.5" fill="#6a5555"/></g></svg>
<span style="left:660.5px;top:83px;font-size:12px;line-height:12px;color:#fff;letter-spacing:0.25px">Verwaltungsdaten</span>
<svg style="left:296px;top:98px" width="974" height="8" viewBox="0 0 974 8"><path d="M0 6 L407 6 L411 2 L415 6 L974 6" fill="none" stroke="#009ce0" stroke-width="2"/></svg>
<div style="left:303px;top:120px;width:482px;height:344px;border:1px solid #e3e3e3;background:#fff"></div>
<span style="left:311px;top:123px;font-size:12px;line-height:12px;color:#000;">Verwaltungsdaten</span>
<div style="left:306px;top:136px;width:476px;height:2px;background:#009ce0"></div>
<div style="left:303px;top:472px;width:482px;height:102px;border:1px solid #e3e3e3;background:#fff"></div>
<span style="left:311px;top:475px;font-size:12px;line-height:12px;color:#000;">Zust&auml;ndigkeit</span>
<div style="left:306px;top:488px;width:476px;height:2px;background:#009ce0"></div>
<div style="left:303px;top:582px;width:482px;height:200px;border:1px solid #e3e3e3;background:#fff"></div>
<span style="left:311px;top:585px;font-size:12px;line-height:12px;color:#000;">Technische Daten</span>
<div style="left:306px;top:598px;width:476px;height:2px;background:#009ce0"></div>
<span style="left:319.5px;top:147px;font-size:12px;line-height:12px;color:#000;">Erfasser</span>
<div style="left:317px;top:161px;width:154px;height:1px;background:#c3c3c3"></div>
<div style="left:471px;top:142px;width:286px;height:20px;background:#ebebeb;border:1px solid #c6c6c6"></div>
<span class="m" style="left:474.5px;top:147px;color:#000;">KUNZJON</span>
<div style="left:756px;top:142px;width:18px;height:20px;background:#fafafa;border:1px solid #9a9a9a"></div>
<svg style="left:758px;top:146px;" width="13" height="12" viewBox="0 0 13 12" shape-rendering="crispEdges"><g shape-rendering="geometricPrecision" fill="none" stroke="#555" stroke-width="1.1"><rect x="0.6" y="3.6" width="8.8" height="8"/><path d="M3.6 1 L3.6 0.6 L12.4 0.6 L12.4 8.4 L11.5 8.4"/></g></svg>
<span style="left:473.5px;top:169px;font-size:12px;line-height:12px;color:#000;">Jonas Kunz</span>
<span style="left:319.5px;top:191px;font-size:12px;line-height:12px;color:#000;">Erfassungsdatum</span>
<div style="left:317px;top:205px;width:154px;height:1px;background:#c3c3c3"></div>
<div style="left:471px;top:186px;width:76px;height:20px;background:#ebebeb;border:1px solid #c6c6c6"></div>
<span class="m" style="left:474.5px;top:191px;color:#000;">05.05.2021</span>
<div style="left:562px;top:186px;width:62px;height:20px;background:#ebebeb;border:1px solid #c6c6c6"></div>
<span class="m" style="left:565.5px;top:191px;color:#000;">11:13:35</span>
<span style="left:319.5px;top:235px;font-size:12px;line-height:12px;color:#000;">Letzter &Auml;nderer</span>
<div style="left:317px;top:249px;width:154px;height:1px;background:#c3c3c3"></div>
<div style="left:471px;top:230px;width:286px;height:20px;background:#ebebeb;border:1px solid #c6c6c6"></div>
<span class="m" style="left:474.5px;top:235px;color:#000;">KUNZJON</span>
<div style="left:756px;top:230px;width:18px;height:20px;background:#fafafa;border:1px solid #9a9a9a"></div>
<svg style="left:758px;top:234px;" width="13" height="12" viewBox="0 0 13 12" shape-rendering="crispEdges"><g shape-rendering="geometricPrecision" fill="none" stroke="#555" stroke-width="1.1"><rect x="0.6" y="3.6" width="8.8" height="8"/><path d="M3.6 1 L3.6 0.6 L12.4 0.6 L12.4 8.4 L11.5 8.4"/></g></svg>
<span style="left:473.5px;top:257px;font-size:12px;line-height:12px;color:#000;">Jonas Kunz</span>
<span style="left:319.5px;top:279px;font-size:12px;line-height:12px;color:#000;">&Auml;nderungsdatum</span>
<div style="left:317px;top:293px;width:154px;height:1px;background:#c3c3c3"></div>
<div style="left:471px;top:274px;width:76px;height:20px;background:#ebebeb;border:1px solid #c6c6c6"></div>
<span class="m" style="left:474.5px;top:279px;color:#000;">05.05.2021</span>
<div style="left:562px;top:274px;width:62px;height:20px;background:#ebebeb;border:1px solid #c6c6c6"></div>
<span class="m" style="left:565.5px;top:279px;color:#000;">11:13:35</span>
<span style="left:319.5px;top:323px;font-size:12px;line-height:12px;color:#000;">Freigabe von</span>
<div style="left:317px;top:337px;width:154px;height:1px;background:#c3c3c3"></div>
<div style="left:471px;top:318px;width:286px;height:20px;background:#ebebeb;border:1px solid #c6c6c6"></div>
<div style="left:756px;top:318px;width:18px;height:20px;background:#fafafa;border:1px solid #9a9a9a"></div>
<svg style="left:758px;top:322px;" width="13" height="12" viewBox="0 0 13 12" shape-rendering="crispEdges"><g shape-rendering="geometricPrecision" fill="none" stroke="#555" stroke-width="1.1"><rect x="0.6" y="3.6" width="8.8" height="8"/><path d="M3.6 1 L3.6 0.6 L12.4 0.6 L12.4 8.4 L11.5 8.4"/></g></svg>
<span style="left:319.5px;top:367px;font-size:12px;line-height:12px;color:#000;">Datum Freigabe</span>
<div style="left:317px;top:381px;width:154px;height:1px;background:#c3c3c3"></div>
<div style="left:471px;top:362px;width:76px;height:20px;background:#ebebeb;border:1px solid #c6c6c6"></div>
<div style="left:562px;top:362px;width:62px;height:20px;background:#ebebeb;border:1px solid #c6c6c6"></div>
<span class="m" style="left:565.5px;top:367px;color:#000;">00:00:00</span>
<span style="left:319.5px;top:411px;font-size:12px;line-height:12px;color:#000;">g&uuml;ltig ab</span>
<div style="left:317px;top:425px;width:154px;height:1px;background:#c3c3c3"></div>
<div style="left:471px;top:406px;width:160px;height:20px;background:#ebebeb;border:1px solid #c6c6c6"></div>
<span class="m" style="left:474.5px;top:411px;color:#000;">05.05.2021 11:13:35</span>
<span style="left:319.5px;top:433px;font-size:12px;line-height:12px;color:#000;">g&uuml;ltig bis</span>
<div style="left:317px;top:447px;width:154px;height:1px;background:#c3c3c3"></div>
<div style="left:471px;top:428px;width:160px;height:20px;background:#ebebeb;border:1px solid #c6c6c6"></div>
<span class="m" style="left:474.5px;top:433px;color:#000;">30.12.9999 01:00:00</span>
<span style="left:319.5px;top:499px;font-size:12px;line-height:12px;color:#000;">Zust&auml;ndigkeitsber.</span>
<div style="left:317px;top:513px;width:154px;height:1px;background:#c3c3c3"></div>
<div style="left:471px;top:494px;width:90px;height:20px;background:#fff;border:1px solid #c6c6c6"></div>
<span style="left:319.5px;top:521px;font-size:12px;line-height:12px;color:#000;">Sachbearbeiter</span>
<div style="left:317px;top:535px;width:154px;height:1px;background:#c3c3c3"></div>
<div style="left:471px;top:516px;width:90px;height:20px;background:#fff;border:1px solid #c6c6c6"></div>
<span style="left:319.5px;top:543px;font-size:12px;line-height:12px;color:#000;">Autorisierungsgr</span>
<div style="left:317px;top:557px;width:154px;height:1px;background:#c3c3c3"></div>
<div style="left:471px;top:538px;width:90px;height:20px;background:#fff;border:1px solid #c6c6c6"></div>
<span style="left:319.5px;top:609px;font-size:12px;line-height:12px;color:#000;">Vorschriften GUID</span>
<div style="left:317px;top:623px;width:154px;height:1px;background:#c3c3c3"></div>
<div style="left:471px;top:604px;width:230px;height:20px;background:#ebebeb;border:1px solid #c6c6c6"></div>
<span class="m" style="left:474.5px;top:609px;color:#000;">00155D0450381EDBABB04527F692E0EE</span>
<span style="left:319.5px;top:631px;font-size:12px;line-height:12px;color:#000;">Original GUID</span>
<div style="left:317px;top:645px;width:154px;height:1px;background:#c3c3c3"></div>
<div style="left:471px;top:626px;width:230px;height:20px;background:#ebebeb;border:1px solid #c6c6c6"></div>
<span class="m" style="left:474.5px;top:631px;color:#000;">00155D0450381EDBABB02737289560EE</span>
<span style="left:319.5px;top:653px;font-size:12px;line-height:12px;color:#000;">Vorschriftennr</span>
<div style="left:317px;top:667px;width:154px;height:1px;background:#c3c3c3"></div>
<div style="left:471px;top:648px;width:76px;height:20px;background:#ebebeb;border:1px solid #c6c6c6"></div>
<span class="m" style="left:474.5px;top:653px;color:#000;">700179415</span>
<span style="left:319.5px;top:675px;font-size:12px;line-height:12px;color:#000;">Version</span>
<div style="left:317px;top:689px;width:154px;height:1px;background:#c3c3c3"></div>
<div style="left:471px;top:670px;width:27px;height:20px;background:#ebebeb;border:1px solid #c6c6c6"></div>
<span class="m" style="left:474.5px;top:675px;color:#000;">3</span>
<span style="left:319.5px;top:697px;font-size:12px;line-height:12px;color:#000;">Vorschriftenart</span>
<div style="left:317px;top:711px;width:154px;height:1px;background:#c3c3c3"></div>
<div style="left:471px;top:692px;width:146px;height:20px;background:#ebebeb;border:1px solid #c6c6c6"></div>
<span style="left:319.5px;top:719px;font-size:12px;line-height:12px;color:#000;">Positionstyp</span>
<div style="left:317px;top:733px;width:154px;height:1px;background:#c3c3c3"></div>
<div style="left:471px;top:714px;width:146px;height:20px;background:#ebebeb;border:1px solid #c6c6c6"></div>
<span class="m" style="left:474.5px;top:719px;color:#000;">UT_2535_X</span>
<span style="left:319.5px;top:741px;font-size:12px;line-height:12px;color:#000;">Relationstyp Knoten</span>
<div style="left:317px;top:755px;width:154px;height:1px;background:#c3c3c3"></div>
<div style="left:471px;top:736px;width:13px;height:20px;background:#ebebeb;border:1px solid #c6c6c6"></div>
<span class="m" style="left:473.5px;top:741px;color:#000;">O</span>
<span style="left:495.5px;top:741px;font-size:12px;line-height:12px;color:#000;">Original</span>
</body></html>
